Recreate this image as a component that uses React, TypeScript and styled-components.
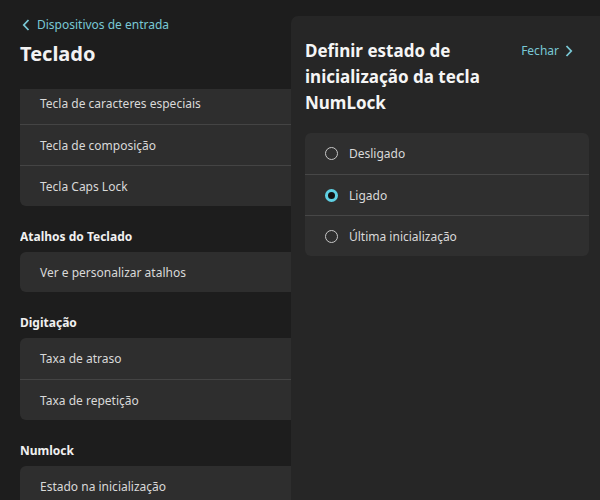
import React from "react";
import styled, { createGlobalStyle } from "styled-components";

const Global = createGlobalStyle`
  html, body { margin: 0; padding: 0; background: #1d1d1d; }
  body { font-family: "Noto Sans", "Open Sans", sans-serif; -webkit-font-smoothing: antialiased; }
  * { box-sizing: border-box; }
`;

const Page = styled.div`
  position: relative;
  width: 600px;
  height: 500px;
  overflow: hidden;
  background: #1d1d1d;
`;

const Main = styled.div`
  display: flex;
  flex-direction: column;
  height: 100%;
  padding-left: 20px;
`;

const Header = styled.div`
  display: flex;
  flex-direction: column;
  padding-top: 15px;
  height: 89px;
  flex-shrink: 0;
`;

const BackLink = styled.a`
  display: flex;
  align-items: center;
  gap: 7px;
  color: #79c8d5;
  font-size: 12px;
  line-height: 20px;
  margin-left: 2px;
`;

const Title = styled.h1`
  margin: 5px 0 0;
  font-size: 20px;
  line-height: 28px;
  font-weight: 700;
  color: #f2f2f2;
`;

const Scroll = styled.div`
  flex: 1;
  overflow: hidden;
`;

const ScrollInner = styled.div`
  margin-top: -6px;
  display: flex;
  flex-direction: column;
`;

const SectionTitle = styled.h2`
  margin: 22px 0 6px;
  font-size: 12px;
  line-height: 18px;
  font-weight: 700;
  color: #f0f0f0;
`;

const Card = styled.div`
  background: #2e2e2e;
  border-radius: 6px;
  overflow: hidden;
  width: 560px;
`;

const Row = styled.div`
  height: 41px;
  display: flex;
  align-items: center;
  padding-left: 20px;
  font-size: 12px;
  color: #d9d9d9;
  &:only-child { height: 40px; }
  & + & { border-top: 1px solid #444; }
`;

const Panel = styled.aside`
  position: absolute;
  left: 291px;
  top: 16px;
  right: -8px;
  bottom: -8px;
  background: #262626;
  border-radius: 7px;
  padding: 22px 19px 0 14px;
  display: flex;
  flex-direction: column;
`;

const PanelHead = styled.div`
  display: flex;
  justify-content: space-between;
  align-items: flex-start;
`;

const PanelTitle = styled.h2`
  margin: 0;
  font-size: 17px;
  line-height: 26px;
  font-weight: 700;
  color: #f5f5f5;
  width: 200px;
`;

const Close = styled.a`
  display: flex;
  align-items: center;
  gap: 6px;
  color: #79c8d5;
  font-size: 12px;
  line-height: 26px;
  margin-right: 16px;
`;

const Options = styled.div`
  margin-top: 17px;
  background: #2f2f2f;
  border-radius: 6px;
  overflow: hidden;
`;

const Option = styled.label`
  height: 41px;
  display: flex;
  align-items: center;
  gap: 11px;
  padding-left: 20px;
  font-size: 12px;
  color: #d9d9d9;
  & + & { border-top: 1px solid #474747; }
`;

const Radio = styled.span<{ $checked?: boolean }>`
  width: 13px;
  height: 13px;
  border-radius: 50%;
  flex-shrink: 0;
  border: ${(p) => (p.$checked ? "3px solid #5fd0e3" : "1.5px solid #c8c8c8")};
  background: ${(p) => (p.$checked ? "#111" : "transparent")};
`;

const Chevron = ({ dir }: { dir: "left" | "right" }) => (
  <svg width="8" height="12" viewBox="0 0 8 12">
    <path
      d={dir === "left" ? "M6.5 1 L1.8 6 L6.5 11" : "M1.5 1 L6.2 6 L1.5 11"}
      fill="none"
      stroke="#79c8d5"
      strokeWidth="1.8"
    />
  </svg>
);

export default function App() {
  return (
    <Page>
      <Global />
      <Main>
        <Header>
          <BackLink>
            <Chevron dir="left" />
            Dispositivos de entrada
          </BackLink>
          <Title>Teclado</Title>
        </Header>
        <Scroll>
          <ScrollInner>
            <Card>
              <Row>Tecla de caracteres especiais</Row>
              <Row>Tecla de composição</Row>
              <Row>Tecla Caps Lock</Row>
            </Card>
            <SectionTitle>Atalhos do Teclado</SectionTitle>
            <Card>
              <Row>Ver e personalizar atalhos</Row>
            </Card>
            <SectionTitle>Digitação</SectionTitle>
            <Card>
              <Row>Taxa de atraso</Row>
              <Row>Taxa de repetição</Row>
            </Card>
            <SectionTitle>Numlock</SectionTitle>
            <Card>
              <Row>Estado na inicialização</Row>
            </Card>
          </ScrollInner>
        </Scroll>
      </Main>
      <Panel>
        <PanelHead>
          <PanelTitle>Definir estado de inicialização da tecla NumLock</PanelTitle>
          <Close>
            Fechar
            <Chevron dir="right" />
          </Close>
        </PanelHead>
        <Options>
          <Option>
            <Radio />
            Desligado
          </Option>
          <Option>
            <Radio $checked />
            Ligado
          </Option>
          <Option>
            <Radio />
            Última inicialização
          </Option>
        </Options>
      </Panel>
    </Page>
  );
}
